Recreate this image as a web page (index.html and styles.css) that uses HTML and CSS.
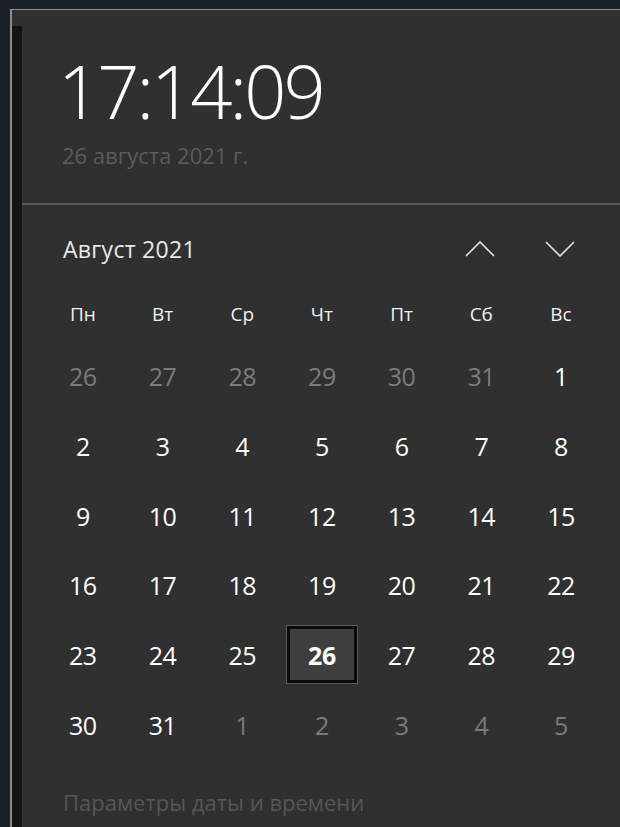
FILE: index.html
```html
<!DOCTYPE html>
<html lang="ru">
<head>
  <meta charset="UTF-8" />
  <title>Дата и время</title>
  <link rel="stylesheet" href="styles.css">
</head>
<body>
  <div class="desk">
    <div class="flyout">
      <div class="edge"></div>
      <div class="main">
        <div class="clock">
          <div class="time">17:14:09</div>
          <div class="date">26 августа 2021 г.</div>
        </div>

        <div class="cal">
          <div class="cal-head">
            <div class="month">Август 2021</div>
            <div class="arrows">
              <button class="arrow">
                <svg width="30" height="16" viewBox="0 0 30 16"><path d="M1 15 L15 1 L29 15" fill="none" stroke="#e6e6e6" stroke-width="1.6"/></svg>
              </button>
              <button class="arrow">
                <svg width="30" height="16" viewBox="0 0 30 16"><path d="M1 1 L15 15 L29 1" fill="none" stroke="#e6e6e6" stroke-width="1.6"/></svg>
              </button>
            </div>
          </div>

          <div class="grid">
            <div class="wd">Пн</div><div class="wd">Вт</div><div class="wd">Ср</div><div class="wd">Чт</div><div class="wd">Пт</div><div class="wd">Сб</div><div class="wd">Вс</div>

            <div class="day other">26</div><div class="day other">27</div><div class="day other">28</div><div class="day other">29</div><div class="day other">30</div><div class="day other">31</div><div class="day">1</div>
            <div class="day">2</div><div class="day">3</div><div class="day">4</div><div class="day">5</div><div class="day">6</div><div class="day">7</div><div class="day">8</div>
            <div class="day">9</div><div class="day">10</div><div class="day">11</div><div class="day">12</div><div class="day">13</div><div class="day">14</div><div class="day">15</div>
            <div class="day">16</div><div class="day">17</div><div class="day">18</div><div class="day">19</div><div class="day">20</div><div class="day">21</div><div class="day">22</div>
            <div class="day">23</div><div class="day">24</div><div class="day">25</div><div class="day today"><span>26</span></div><div class="day">27</div><div class="day">28</div><div class="day">29</div>
            <div class="day">30</div><div class="day">31</div><div class="day other">1</div><div class="day other">2</div><div class="day other">3</div><div class="day other">4</div><div class="day other">5</div>
          </div>
        </div>

        <div class="settings">Параметры даты и времени</div>
      </div>
    </div>
  </div>
</body>
</html>
```

FILE: styles.css
```css
* {
  margin: 0;
  padding: 0;
  box-sizing: border-box;
}

html, body {
  height: 100%;
  overflow: hidden;
}

body {
  background: #1a2128;
  font-family: "Open Sans", "Noto Sans", sans-serif;
  color: #fff;
}

.desk {
  padding: 9px 0 0 10px;
  height: 100%;
}

.flyout {
  display: flex;
  height: 100%;
  background: #303030;
  border-top: 1px solid #8a8d90;
  border-left: 2px solid #8a8d90;
}

.edge {
  width: 10px;
  margin-top: 16px;
  background: #141414;
}

.main {
  flex: 1;
}

.clock {
  padding: 44px 0 0 40px;
  height: 195px;
  border-bottom: 2px solid #5a5a5a;
}

.time {
  margin-left: -4px;
  font-size: 74px;
  font-weight: 300;
  line-height: 1;
  letter-spacing: -3px;
  color: #fff;
}

.date {
  margin-top: 12px;
  font-size: 22px;
  color: #5a5a5a;
}

.cal {
  padding: 28px 19px 0 21px;
}

.cal-head {
  display: flex;
  align-items: center;
  justify-content: space-between;
  padding-left: 20px;
}

.month {
  font-size: 23px;
  letter-spacing: 0.3px;
  color: #e8e8e8;
}

.arrows {
  display: flex;
  gap: 50px;
  padding-right: 26px;
}

.arrow {
  background: none;
  border: none;
  display: flex;
}

.grid {
  display: grid;
  grid-template-columns: repeat(7, 79.7px);
  grid-template-rows: 54.3px;
  grid-auto-rows: 69.7px;
  margin-top: 22px;
}

.wd {
  display: flex;
  align-items: center;
  justify-content: center;
  font-size: 19px;
  color: #f0f0f0;
}

.day {
  display: flex;
  align-items: center;
  justify-content: center;
  font-size: 25px;
  letter-spacing: -0.5px;
  color: #fff;
}

.day.other {
  color: #7b7b7b;
}

.today span {
  display: flex;
  align-items: center;
  justify-content: center;
  width: 70px;
  height: 57px;
  background: #3e3e3e;
  border: 3px solid #0a0a0a;
  outline: 1px solid #5a5a5a;
  font-weight: 700;
}

.settings {
  padding: 28px 0 0 41px;
  font-size: 22px;
  color: #555;
}
```
